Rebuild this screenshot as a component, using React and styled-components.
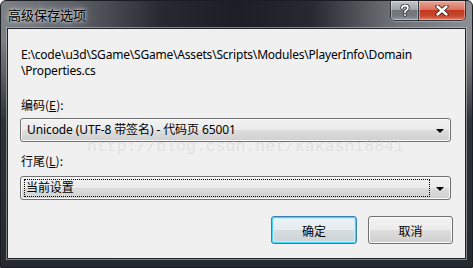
import React from 'react';
import styled, { createGlobalStyle } from 'styled-components';

const GlobalStyle = createGlobalStyle`
  html, body {
    margin: 0;
    padding: 0;
    background: #ffffff;
  }
  body {
    font-family: "Noto Sans", "Noto Sans CJK SC", sans-serif;
    font-size: 12px;
  }
`;

const Window = styled.div`
  position: relative;
  width: 473px;
  height: 268px;
  box-sizing: border-box;
  border-radius: 6px 6px 0 0;
  border: 1px solid #1a1d21;
  background:
    linear-gradient(180deg, rgba(36, 41, 48, 0) 0px, rgba(36, 41, 48, 0) 40px, rgba(36, 41, 48, 0.9) 120px, #252a31 100%),
    linear-gradient(90deg, #7d8186 0%, #5d6167 16%, #262a30 34%, #1b1f25 50%, #262a30 66%, #6a6e73 82%, #8b8e92 100%);
  display: flex;
  flex-direction: column;
  overflow: hidden;
`;

const TitleBar = styled.div`
  height: 27px;
  display: flex;
  align-items: flex-start;
  padding-left: 7px;
`;

const Title = styled.div`
  margin-top: 5px;
  font-family: "Noto Sans CJK SC", sans-serif;
  font-size: 13px;
  line-height: 17px;
  color: #000;
  text-shadow: 0 0 6px rgba(255, 255, 255, 0.85), 0 0 3px rgba(255, 255, 255, 0.8);
`;

const Caps = styled.div`
  margin-left: auto;
  margin-right: 6px;
  display: flex;
  border: 1px solid #30353b;
  border-top: none;
  border-radius: 0 0 5px 5px;
  overflow: hidden;
  box-shadow: 0 1px 0 rgba(255, 255, 255, 0.25);
`;

const CapButton = styled.div`
  width: ${(p) => p.$w}px;
  height: 19px;
  display: flex;
  align-items: center;
  justify-content: center;
  box-shadow: inset 0 0 0 1px rgba(255, 255, 255, 0.35);
  background: ${(p) =>
    p.$close
      ? 'linear-gradient(180deg, #e7a495 0%, #d7735f 45%, #c2391f 50%, #c84a30 80%, #e0806a 100%)'
      : 'linear-gradient(180deg, #c1c5c9 0%, #9ea3a8 45%, #6f757b 50%, #737a80 80%, #9aa0a5 100%)'};
  & + & {
    border-left: 1px solid #30353b;
  }
`;

const Client = styled.div`
  position: relative;
  margin: 0 6px;
  height: 231px;
  box-sizing: border-box;
  border: 1px solid #1f242a;
  box-shadow: 0 0 0 1px rgba(200, 206, 212, 0.55);
  background: #f0f0f0;
  padding: 18px 12px 0 12px;
  display: flex;
  flex-direction: column;
`;

const PathText = styled.div`
  padding-left: 1px;
  font-size: 12px;
  line-height: 16px;
  color: #000;
  letter-spacing: -0.2px;
`;

const Label = styled.div`
  padding-left: 1px;
  margin-top: ${(p) => p.$top}px;
  font-family: "Noto Sans CJK SC", sans-serif;
  font-size: 12px;
  line-height: 16px;
  color: #000;
  u {
    text-decoration: underline;
    text-underline-offset: 1px;
  }
`;

const Combo = styled.div`
  margin-top: ${(p) => p.$top}px;
  width: 431px;
  height: 24px;
  box-sizing: border-box;
  border: 1px solid #707070;
  border-radius: 3px;
  box-shadow: inset 0 0 0 1px #fbfbfb;
  background: linear-gradient(180deg, #f2f2f2 0%, #ebebeb 48%, #dddddd 52%, #cfcfcf 100%);
  display: flex;
  align-items: center;
  padding: 0 6px 0 3px;
`;

const ComboText = styled.div`
  flex: 1;
  height: 18px;
  box-sizing: border-box;
  padding-left: ${(p) => (p.$focus ? 1 : 2)}px;
  margin-right: 6px;
  border: 1px ${(p) => (p.$focus ? 'dotted #000' : 'solid transparent')};
  font-family: "Noto Sans", "Noto Sans CJK SC", sans-serif;
  font-size: 12px;
  line-height: 16px;
  color: #000;
  white-space: nowrap;
  letter-spacing: -0.1px;
`;

const Arrow = styled.div`
  width: 0;
  height: 0;
  border-left: 4px solid transparent;
  border-right: 4px solid transparent;
  border-top: 4px solid #000;
  margin-top: 2px;
`;

const Buttons = styled.div`
  margin-top: 16px;
  display: flex;
  justify-content: flex-end;
  gap: 11px;
`;

const Button = styled.div`
  width: ${(p) => p.$w}px;
  height: 28px;
  box-sizing: border-box;
  border: 1px solid ${(p) => (p.$default ? '#3c7fb1' : '#707070')};
  border-radius: 3px;
  box-shadow: ${(p) =>
    p.$default
      ? 'inset 0 0 0 1px #48d3f5, inset 0 0 0 2px #c6eefb'
      : 'inset 0 0 0 1px #fbfbfb'};
  background: ${(p) =>
    p.$default
      ? 'linear-gradient(180deg, #eef3f6 0%, #e6ecef 48%, #d6dde1 52%, #cbd2d6 100%)'
      : 'linear-gradient(180deg, #f2f2f2 0%, #ebebeb 48%, #dddddd 52%, #cfcfcf 100%)'};
  display: flex;
  align-items: center;
  justify-content: center;
  font-family: "Noto Sans CJK SC", sans-serif;
  font-size: 12px;
  color: #000;
`;

const Watermark = styled.div`
  position: absolute;
  left: 79px;
  top: 109px;
  font-family: "Liberation Mono", monospace;
  font-size: 16.5px;
  line-height: 18px;
  color: rgba(200, 200, 200, 0.4);
  pointer-events: none;
  white-space: nowrap;
`;

function HelpGlyph() {
  return (
    <svg width="10" height="13" viewBox="0 0 10 13">
      <path
        d="M2 4 Q2 1.5 5 1.5 Q8 1.5 8 4 Q8 5.5 6 6.5 Q5 7 5 8.5"
        fill="none"
        stroke="#2a2f35"
        strokeWidth="3.4"
        strokeLinecap="round"
      />
      <path
        d="M2 4 Q2 1.5 5 1.5 Q8 1.5 8 4 Q8 5.5 6 6.5 Q5 7 5 8.5"
        fill="none"
        stroke="#ffffff"
        strokeWidth="1.8"
        strokeLinecap="round"
      />
      <circle cx="5" cy="11" r="1.7" fill="#2a2f35" />
      <circle cx="5" cy="11" r="1" fill="#ffffff" />
    </svg>
  );
}

function CloseGlyph() {
  return (
    <svg width="14" height="11" viewBox="0 0 14 11">
      <path d="M2.5 1.5 L11.5 9.5 M11.5 1.5 L2.5 9.5" stroke="#3a2420" strokeWidth="4.2" strokeLinecap="round" />
      <path d="M2.5 1.5 L11.5 9.5 M11.5 1.5 L2.5 9.5" stroke="#ffffff" strokeWidth="2.4" strokeLinecap="round" />
    </svg>
  );
}

export default function App() {
  return (
    <>
      <GlobalStyle />
      <Window>
        <TitleBar>
          <Title>高级保存选项</Title>
          <Caps>
            <CapButton $w={27}>
              <HelpGlyph />
            </CapButton>
            <CapButton $w={46} $close>
              <CloseGlyph />
            </CapButton>
          </Caps>
        </TitleBar>
        <Client>
          <PathText>
            E:\code\u3d\SGame\SGame\Assets\Scripts\Modules\PlayerInfo\Domain
            <br />
            \Properties.cs
          </PathText>
          <Label $top={18}>
            编码(<u>E</u>):
          </Label>
          <Combo $top={5}>
            <ComboText>Unicode (UTF-8 带签名) - 代码页 65001</ComboText>
            <Arrow />
          </Combo>
          <Label $top={11}>
            行尾(<u>L</u>):
          </Label>
          <Combo $top={7}>
            <ComboText $focus>当前设置</ComboText>
            <Arrow />
          </Combo>
          <Buttons>
            <Button $w={86} $default>确定</Button>
            <Button $w={85}>取消</Button>
          </Buttons>
          <Watermark>http://blog.csdn.net/kakashi8841</Watermark>
        </Client>
      </Window>
    </>
  );
}
